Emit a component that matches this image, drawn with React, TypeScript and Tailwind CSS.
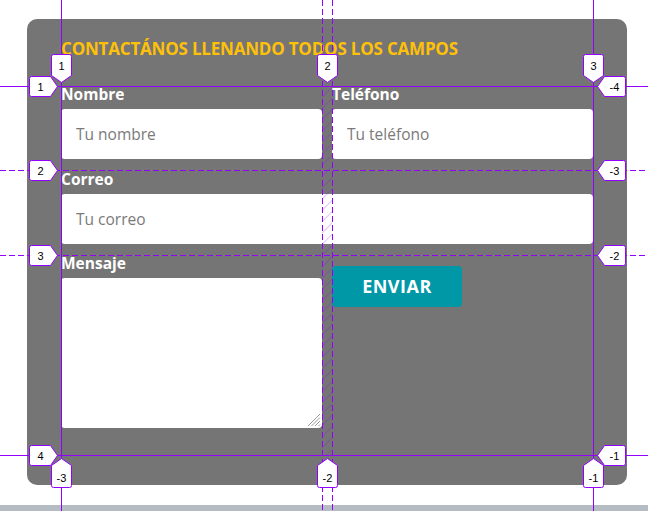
import React from "react";

const PURPLE = "#9400ff";

function DownLabel({ c, y, t }: { c: number; y: number; t: string }) {
  return (
    <g>
      <path
        d={`M${c - 10} ${y + 2} q0 -2 2 -2 h16 q2 0 2 2 v19 l-10 7 l-10 -7 z`}
        fill="white"
        stroke={PURPLE}
        strokeWidth={1}
      />
      <text x={c} y={y + 15} textAnchor="middle" fontSize="11" fontFamily="Liberation Sans, Arial, sans-serif" fill="#000">
        {t}
      </text>
    </g>
  );
}

function UpLabel({ c, y, t }: { c: number; y: number; t: string }) {
  return (
    <g>
      <path
        d={`M${c} ${y} l10 7 v20 q0 2 -2 2 h-16 q-2 0 -2 -2 v-20 z`}
        fill="white"
        stroke={PURPLE}
        strokeWidth={1}
      />
      <text x={c} y={y + 23} textAnchor="middle" fontSize="11" fontFamily="Liberation Sans, Arial, sans-serif" fill="#000">
        {t}
      </text>
    </g>
  );
}

function RightLabel({ x, c, t }: { x: number; c: number; t: string }) {
  return (
    <g>
      <path
        d={`M${x} ${c} l-7 10 h-19 q-2 0 -2 -2 v-16 q0 -2 2 -2 h19 z`}
        fill="white"
        stroke={PURPLE}
        strokeWidth={1}
      />
      <text x={x - 17} y={c + 4} textAnchor="middle" fontSize="11" fontFamily="Liberation Sans, Arial, sans-serif" fill="#000">
        {t}
      </text>
    </g>
  );
}

function LeftLabel({ x, c, t }: { x: number; c: number; t: string }) {
  return (
    <g>
      <path
        d={`M${x} ${c} l7 -10 h19 q2 0 2 2 v16 q0 2 -2 2 h-19 z`}
        fill="white"
        stroke={PURPLE}
        strokeWidth={1}
      />
      <text x={x + 17} y={c + 4} textAnchor="middle" fontSize="11" fontFamily="Liberation Sans, Arial, sans-serif" fill="#000">
        {t}
      </text>
    </g>
  );
}

function GridOverlay() {
  return (
    <svg className="absolute left-0 top-0 pointer-events-none" width={648} height={511} viewBox="0 0 648 511">
      <defs>
        <pattern id="hatch" width="8" height="8" patternUnits="userSpaceOnUse" patternTransform="rotate(45)">
          <line x1="0" y1="0" x2="0" y2="8" stroke={PURPLE} strokeOpacity="0.25" strokeWidth="2" />
        </pattern>
      </defs>
      <rect x={322} y={86} width={10} height={369} fill="url(#hatch)" />
      <line x1={61.5} y1={0} x2={61.5} y2={511} stroke={PURPLE} strokeWidth={1} />
      <line x1={593.5} y1={0} x2={593.5} y2={511} stroke={PURPLE} strokeWidth={1} />
      <line x1={322.5} y1={0} x2={322.5} y2={511} stroke={PURPLE} strokeWidth={1} strokeDasharray="6 3" />
      <line x1={332.5} y1={0} x2={332.5} y2={511} stroke={PURPLE} strokeWidth={1} strokeDasharray="6 3" />
      <line x1={0} y1={86.5} x2={648} y2={86.5} stroke={PURPLE} strokeWidth={1} />
      <line x1={0} y1={455.5} x2={648} y2={455.5} stroke={PURPLE} strokeWidth={1} />
      <line x1={0} y1={170.5} x2={648} y2={170.5} stroke={PURPLE} strokeWidth={1} strokeDasharray="6 3" />
      <line x1={0} y1={255.5} x2={648} y2={255.5} stroke={PURPLE} strokeWidth={1} strokeDasharray="6 3" />
      <DownLabel c={61.5} y={54.5} t="1" />
      <DownLabel c={327.5} y={54.5} t="2" />
      <DownLabel c={593.5} y={54.5} t="3" />
      <UpLabel c={61.5} y={458.5} t="-3" />
      <UpLabel c={327.5} y={458.5} t="-2" />
      <UpLabel c={593.5} y={458.5} t="-1" />
      <RightLabel x={57.5} c={86.5} t="1" />
      <RightLabel x={57.5} c={170.5} t="2" />
      <RightLabel x={57.5} c={255.5} t="3" />
      <RightLabel x={57.5} c={455.5} t="4" />
      <LeftLabel x={597.5} c={86.5} t="-4" />
      <LeftLabel x={597.5} c={170.5} t="-3" />
      <LeftLabel x={597.5} c={255.5} t="-2" />
      <LeftLabel x={597.5} c={455.5} t="-1" />
    </svg>
  );
}

const font = { fontFamily: '"Open Sans", "Liberation Sans", sans-serif' };

export default function App() {
  const inputCls =
    "block w-full h-[50px] rounded-[4px] bg-white pl-[15px] text-[15.5px] font-normal text-[#333] placeholder:text-[#7a7a7a] outline-none";
  const labelCls = "block text-[15.5px] leading-[17px] font-bold text-white";
  return (
    <div className="relative w-[648px] h-[511px] overflow-hidden bg-white flex flex-col" style={font}>
      <div className="pt-[19px] pl-[27px]">
        <div className="w-[600px] h-[466px] rounded-[10px] bg-[#757575] px-[34px]">
          <div className="h-[67px] pt-[19px]">
            <h1 className="text-[17px] leading-[22px] font-bold tracking-[-0.2px] text-[#ffc107]">
              CONTACTÁNOS LLENANDO TODOS LOS CAMPOS
            </h1>
          </div>
          <form className="grid grid-cols-2 gap-x-[10px] grid-rows-[84px_85px_200px]">
            <div>
              <label className={`${labelCls} h-[23px]`}>Nombre</label>
              <input className={inputCls} placeholder="Tu nombre" />
            </div>
            <div>
              <label className={`${labelCls} h-[23px]`}>Teléfono</label>
              <input className={inputCls} placeholder="Tu teléfono" />
            </div>
            <div className="col-span-2">
              <label className={`${labelCls} h-[24px] pt-[1px]`}>Correo</label>
              <input className={inputCls} placeholder="Tu correo" />
            </div>
            <div>
              <label className={`${labelCls} h-[23px]`}>Mensaje</label>
              <div className="relative">
                <textarea className="block w-full h-[150px] rounded-[4px] bg-white resize-none outline-none" />
                <svg className="absolute right-[1px] bottom-[1px]" width="14" height="14" viewBox="0 0 14 14">
                  <line x1="13" y1="1" x2="1" y2="13" stroke="#9a9a9a" strokeWidth="1" />
                  <line x1="13" y1="4.5" x2="4.5" y2="13" stroke="#9a9a9a" strokeWidth="1" />
                  <line x1="13" y1="8" x2="8" y2="13" stroke="#9a9a9a" strokeWidth="1" />
                  <line x1="13" y1="11.5" x2="11.5" y2="13" stroke="#9a9a9a" strokeWidth="1" />
                </svg>
              </div>
            </div>
            <div className="pt-[11px]">
              <button
                type="button"
                className="w-[130px] h-[41px] rounded-[4px] bg-[#0097a7] text-white text-[18px] font-bold tracking-[0.5px]"
              >
                ENVIAR
              </button>
            </div>
          </form>
        </div>
      </div>
      <div className="flex-1" />
      <div className="h-[6px] bg-[#b5bcc4]" />
      <GridOverlay />
    </div>
  );
}
